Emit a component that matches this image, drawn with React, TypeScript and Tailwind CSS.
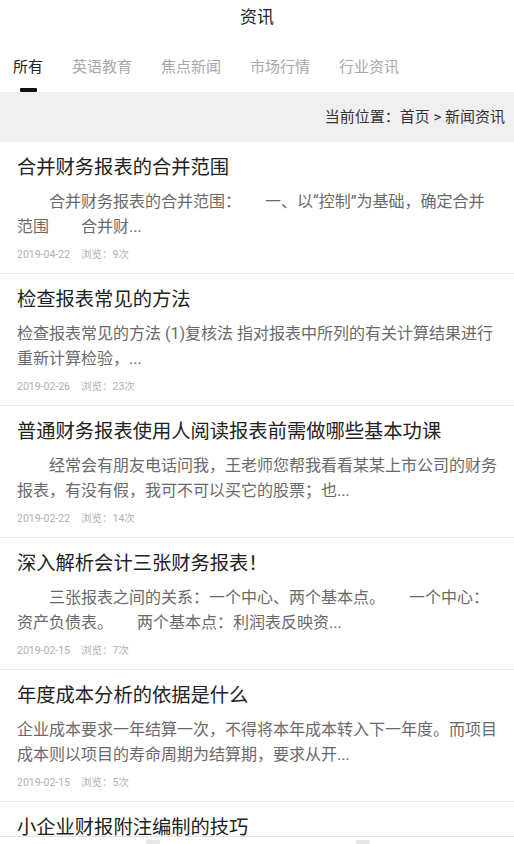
import React from "react";

const FONT = { fontFamily: '"Roboto", "Noto Sans CJK SC", "Noto Sans", sans-serif' };

type Item = { title: string; desc: string; indent: boolean; date: string; views: number };

const items: Item[] = [
  {
    title: "合并财务报表的合并范围",
    desc: "合并财务报表的合并范围：\u3000\u3000一、以“控制”为基础，确定合并范围\u3000\u3000合并财...",
    indent: true,
    date: "2019-04-22",
    views: 9,
  },
  {
    title: "检查报表常见的方法",
    desc: "检查报表常见的方法 (1)复核法 指对报表中所列的有关计算结果进行重新计算检验，...",
    indent: false,
    date: "2019-02-26",
    views: 23,
  },
  {
    title: "普通财务报表使用人阅读报表前需做哪些基本功课",
    desc: "经常会有朋友电话问我，王老师您帮我看看某某上市公司的财务报表，有没有假，我可不可以买它的股票；也...",
    indent: true,
    date: "2019-02-22",
    views: 14,
  },
  {
    title: "深入解析会计三张财务报表！",
    desc: "三张报表之间的关系：一个中心、两个基本点。\u3000\u3000一个中心：资产负债表。\u3000\u3000两个基本点：利润表反映资...",
    indent: true,
    date: "2019-02-15",
    views: 7,
  },
  {
    title: "年度成本分析的依据是什么",
    desc: "企业成本要求一年结算一次，不得将本年成本转入下一年度。而项目成本则以项目的寿命周期为结算期，要求从开...",
    indent: false,
    date: "2019-02-15",
    views: 5,
  },
  {
    title: "小企业财报附注编制的技巧",
    desc: "财务报表附注是对资产负债表、利润表、现金流量表等报表中列示项目的文字描述或明细资料，以及对未能在...",
    indent: false,
    date: "2019-02-10",
    views: 6,
  },
];

const tabs = ["所有", "英语教育", "焦点新闻", "市场行情", "行业资讯"];

export default function App() {
  return (
    <div className="w-[514px] bg-white" style={FONT}>
      <div className="h-[36px] flex items-center justify-center text-[17px] text-[#222]">资讯</div>
      <div className="h-[56px] flex items-start pl-[13px] gap-[29px] pt-[20px]">
        {tabs.map((t, i) => (
          <div key={t} className="flex flex-col items-center">
            <span className={`text-[15px] leading-[22px] ${i === 0 ? "text-[#222]" : "text-[#a8a8a8]"}`}>{t}</span>
            {i === 0 && <div className="mt-[10px] w-[17px] h-[4px] bg-[#111] rounded-[1px]" />}
          </div>
        ))}
      </div>
      <div className="h-[50px] bg-[#f0f0f0] flex items-center justify-end pr-[9px] text-[15px] text-[#333]">
        当前位置：首页 &gt; 新闻资讯
      </div>
      <div>
        {items.map((it) => (
          <div key={it.title} className="px-[17px] pt-[13px] pb-[10px] border-b border-[#ececec]">
            <div className="text-[19.3px] leading-[26px] text-[#222]">{it.title}</div>
            <div
              className="mt-[8px] text-[16px] leading-[25px] text-[#6a6a6a] h-[50px] overflow-hidden"
              style={{ textIndent: it.indent ? "2em" : 0 }}
            >
              {it.desc}
            </div>
            <div className="mt-[8px] text-[10.5px] leading-[16px] text-[#b0b0b0] flex gap-[11px]">
              <span>{it.date}</span>
              <span>浏览：{it.views}次</span>
            </div>
          </div>
        ))}
      </div>
      <div className="fixed left-0 top-[836px] w-[514px] h-[20px] bg-white border-t border-[#e3e3e3]">
        <div className="absolute left-[146px] top-[3px] w-[14px] h-[6px] bg-[#e6e6e6] rounded-[2px]" />
        <div className="absolute left-[356px] top-[3px] w-[14px] h-[6px] bg-[#e6e6e6] rounded-[2px]" />
      </div>
    </div>
  );
}
